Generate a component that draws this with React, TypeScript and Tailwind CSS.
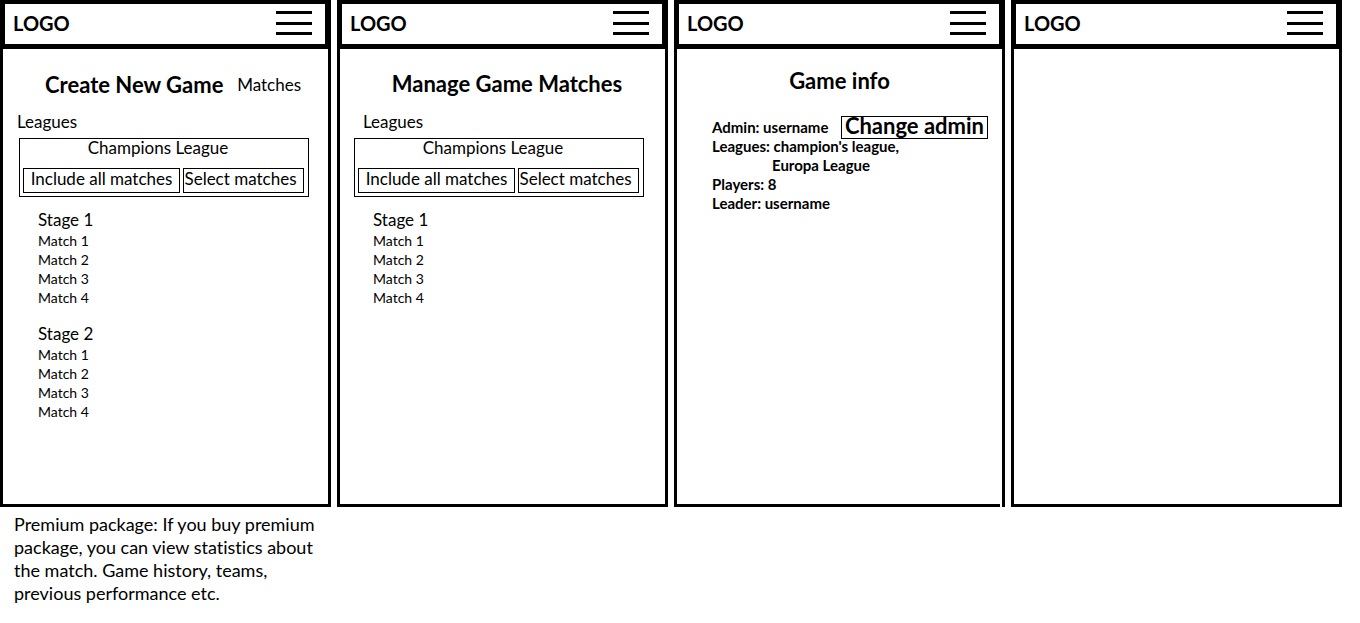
import type { ReactNode } from "react";

function MenuIcon() {
  return (
    <svg width="36" height="24" viewBox="0 0 36 24" fill="#000" shapeRendering="crispEdges" aria-hidden="true">
      <rect width="36" height="3" y="0" />
      <rect width="36" height="3" y="11" />
      <rect width="36" height="3" y="21" />
    </svg>
  );
}

function Phone({ children, openCorner = false }: { children?: ReactNode; openCorner?: boolean }) {
  return (
    <section className="flex min-h-[507px] flex-col">
      <header className="flex h-[49px] items-center justify-between border-t-4 border-r-6 border-b-5 border-l-5 border-black pr-[13px] pb-[2px] pl-2">
        <a href="#" className="text-[20px] leading-7 font-bold">
          LOGO
        </a>
        <button type="button" aria-label="Menu" className="block">
          <MenuIcon />
        </button>
      </header>
      <div className="relative grow border-x-3 border-b-3 border-black">
        {children}
        {openCorner && <span className="absolute right-0 -bottom-[3px] h-[3px] w-[2px] bg-white" />}
      </div>
    </section>
  );
}

function LeagueCard() {
  return (
    <div className="border border-black px-[3px] pb-[3px]">
      <h3 className="pr-3 text-center leading-[18px]">Champions League</h3>
      <div className="mt-[11px] flex gap-[3px] pr-px">
        <button type="button" className="h-[25px] grow border border-black pb-[3px] leading-5 whitespace-nowrap">
          Include all matches
        </button>
        <button
          type="button"
          className="h-[25px] w-[121px] shrink-0 border border-black pr-[6px] pb-[3px] leading-5 whitespace-nowrap"
        >
          Select matches
        </button>
      </div>
    </div>
  );
}

function Stage({ number }: { number: number }) {
  return (
    <section className="pl-[19px]">
      <h4 className="leading-[23px]">Stage {number}</h4>
      <ul className="text-[14px] leading-[19px]">
        {[1, 2, 3, 4].map((match) => (
          <li key={match}>Match {match}</li>
        ))}
      </ul>
    </section>
  );
}

export default function App() {
  return (
    <main className="grid min-h-screen grid-cols-4 items-start gap-[6px] bg-white pr-[18px] font-['Lato',sans-serif] text-[17px] text-black [font-variant-ligatures:none]">
      <div>
        <Phone>
          <div className="pt-[22px] pr-[19px] pl-4">
            <div className="flex items-center justify-between pr-2 pl-[26px] whitespace-nowrap">
              <h1 className="text-[22px] leading-7 font-bold">Create New Game</h1>
              <span>Matches</span>
            </div>
            <h2 className="mt-[11px] mb-[5px] -ml-[2px] leading-[23px]">Leagues</h2>
            <LeagueCard />
            <div className="mt-[11px] flex flex-col gap-[15px]">
              <Stage number={1} />
              <Stage number={2} />
            </div>
          </div>
        </Phone>
        <p className="mt-[6px] pr-4 pl-[14px] text-[18px] leading-[23px]">
          Premium package: If you buy premium package, you can view statistics about the match. Game history, teams,
          previous performance etc.
        </p>
      </div>

      <Phone>
        <div className="pt-[21px] pr-[21px] pl-[14px]">
          <h1 className="pl-4 text-center text-[22px] leading-7 font-bold whitespace-nowrap">Manage Game Matches</h1>
          <h2 className="mt-3 mb-[5px] pl-[9px] leading-[23px]">Leagues</h2>
          <LeagueCard />
          <div className="mt-[11px]">
            <Stage number={1} />
          </div>
        </div>
      </Phone>

      <Phone openCorner>
        <div className="pt-[18px] pr-[14px] pl-[35px] font-bold">
          <h1 className="pr-[21px] text-center text-[22px] leading-7">Game info</h1>
          <div className="mt-[23px] text-[15px] leading-[19px] whitespace-nowrap">
            <div className="flex h-[19px] items-center justify-between">
              <p>Admin: username</p>
              <button type="button" className="h-[23px] border border-black px-[3px] pb-[3px] text-[22px] leading-[18px]">
                Change admin
              </button>
            </div>
            <p>Leagues: champion's league,</p>
            <p className="pl-[60px]">Europa League</p>
            <p>Players: 8</p>
            <p>Leader: username</p>
          </div>
        </div>
      </Phone>

      <Phone />
    </main>
  );
}
